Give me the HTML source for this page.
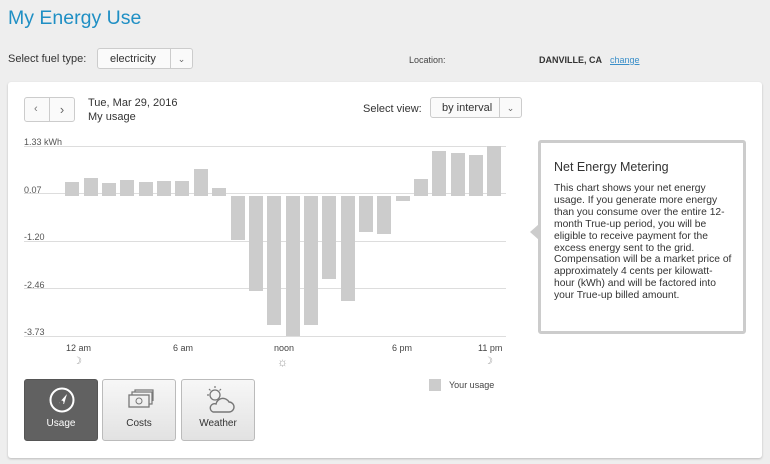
<!DOCTYPE html>
<html><head><meta charset="utf-8"><style>
*{margin:0;padding:0;box-sizing:border-box}
body{width:770px;height:464px;background:#eeeeee;font-family:"Liberation Sans",sans-serif;color:#333;position:relative;overflow:hidden}
.a{position:absolute}
h1{position:absolute;left:8px;top:7px;font-size:19.5px;font-weight:normal;color:#1f8fc4}
.sel{position:absolute;background:#fafafa;border:1px solid #ccc;border-radius:3px;font-size:11px;color:#333}
.sel span{position:absolute;top:4px}
.sel i{position:absolute;top:0;bottom:0;border-left:1px solid #ccc;width:22px;right:0;font-style:normal;text-align:center;color:#666;font-size:9px;line-height:20px}
.card{position:absolute;left:8px;top:82px;width:754px;height:376px;background:#fff;border-radius:3px;box-shadow:0 1px 2px #bbb}
.bar{position:absolute;background:#cccccc;width:14px}
.yl{position:absolute;left:24px;font-size:9px;color:#555}
.gl{position:absolute;left:24px;width:482px;height:1px;background:#ddd}
.xl{position:absolute;font-size:9px;color:#444;top:343px}
.btn{position:absolute;top:379px;width:74px;height:62px;border:1px solid #bbb;border-radius:3px;background:linear-gradient(#f7f7f7,#e2e2e2);font-size:10px;text-align:center;color:#333}
.btn div{position:absolute;top:38px;width:100%}
</style></head><body>
<h1>My Energy Use</h1>
<div class="a" style="left:8px;top:53px;font-size:11px">Select fuel type:</div>
<div class="sel" style="left:97px;top:48px;width:96px;height:21px"><span style="left:12px">electricity</span><i>&#8964;</i></div>
<div class="a" style="left:409px;top:55px;font-size:9px;color:#444">Location:</div>
<div class="a" style="left:539px;top:55px;font-size:9px;font-weight:bold;color:#333">DANVILLE, CA</div>
<div class="a" style="left:610px;top:55px;font-size:9px;color:#3a8fc9;text-decoration:underline">change</div>
<div class="card"></div>
<div class="sel" style="left:24px;top:97px;width:51px;height:25px"><span style="left:9px;top:5px;color:#777">&#8249;</span><i style="width:25px;line-height:23px;font-size:13px">&#8250;</i></div>
<div class="a" style="left:88px;top:97px;font-size:11px">Tue, Mar 29, 2016</div>
<div class="a" style="left:88px;top:111px;font-size:11px">My usage</div>
<div class="a" style="left:363px;top:103px;font-size:11px">Select view:</div>
<div class="sel" style="left:430px;top:97px;width:92px;height:21px"><span style="left:11px">by interval</span><i>&#8964;</i></div>
<div class="gl" style="top:146px"></div><div class="gl" style="top:193px"></div><div class="gl" style="top:241px"></div><div class="gl" style="top:288px"></div><div class="gl" style="top:336px"></div>
<div class="yl" style="top:137px">1.33 kWh</div><div class="yl" style="top:185px">0.07</div><div class="yl" style="top:232px">-1.20</div><div class="yl" style="top:280px">-2.46</div><div class="yl" style="top:327px">-3.73</div>
<div class="bar" style="left:65px;top:182px;height:14px"></div>
<div class="bar" style="left:84px;top:178px;height:18px"></div>
<div class="bar" style="left:102px;top:183px;height:13px"></div>
<div class="bar" style="left:120px;top:180px;height:16px"></div>
<div class="bar" style="left:139px;top:182px;height:14px"></div>
<div class="bar" style="left:157px;top:181px;height:15px"></div>
<div class="bar" style="left:175px;top:181px;height:15px"></div>
<div class="bar" style="left:194px;top:169px;height:27px"></div>
<div class="bar" style="left:212px;top:188px;height:8px"></div>
<div class="bar" style="left:231px;top:196px;height:44px"></div>
<div class="bar" style="left:249px;top:196px;height:95px"></div>
<div class="bar" style="left:267px;top:196px;height:129px"></div>
<div class="bar" style="left:286px;top:196px;height:140px"></div>
<div class="bar" style="left:304px;top:196px;height:129px"></div>
<div class="bar" style="left:322px;top:196px;height:83px"></div>
<div class="bar" style="left:341px;top:196px;height:105px"></div>
<div class="bar" style="left:359px;top:196px;height:36px"></div>
<div class="bar" style="left:377px;top:196px;height:38px"></div>
<div class="bar" style="left:396px;top:196px;height:5px"></div>
<div class="bar" style="left:414px;top:179px;height:17px"></div>
<div class="bar" style="left:432px;top:151px;height:45px"></div>
<div class="bar" style="left:451px;top:153px;height:43px"></div>
<div class="bar" style="left:469px;top:155px;height:41px"></div>
<div class="bar" style="left:487px;top:146px;height:50px"></div>
<div class="xl" style="left:66px">12 am</div><div class="xl" style="left:173px">6 am</div><div class="xl" style="left:274px">noon</div><div class="xl" style="left:392px">6 pm</div><div class="xl" style="left:478px">11 pm</div>
<div class="a" style="left:73px;top:356px;font-size:10px;color:#999">&#9789;</div>
<div class="a" style="left:277px;top:355px;font-size:12px;color:#999">&#9788;</div>
<div class="a" style="left:484px;top:356px;font-size:10px;color:#999">&#9789;</div>
<div class="a" style="left:538px;top:140px;width:208px;height:194px;border:3px solid #ccc;border-radius:3px;background:#fff"></div>
<div class="a" style="left:530px;top:224px;width:0;height:0;border-top:8px solid transparent;border-bottom:8px solid transparent;border-right:9px solid #ccc"></div>
<div class="a" style="left:554px;top:160px;font-size:12.5px;color:#333">Net Energy Metering</div>
<div class="a" style="left:554px;top:183px;width:178px;font-size:10.3px;line-height:11.9px;color:#333">This chart shows your net energy usage. If you generate more energy than you consume over the entire 12-month True-up period, you will be eligible to receive payment for the excess energy sent to the grid. Compensation will be a market price of approximately 4 cents per kilowatt-hour (kWh) and will be factored into your True-up billed amount.</div>
<div class="a" style="left:429px;top:379px;width:12px;height:12px;background:#ccc"></div>
<div class="a" style="left:449px;top:380px;font-size:9px;color:#444">Your usage</div>
<div class="btn" style="left:24px;background:#616161;border-color:#555;color:#fff"><svg class="a" style="left:23px;top:6px" width="28" height="28" viewBox="0 0 28 28"><circle cx="14" cy="14" r="11.5" fill="none" stroke="#fff" stroke-width="2"/><path d="M11 17 L19 8 L16 18 Z" fill="#fff"/><circle cx="13.5" cy="16.5" r="2" fill="#616161"/></svg><div>Usage</div></div>
<div class="btn" style="left:102px"><svg class="a" style="left:24px;top:9px" width="28" height="20" viewBox="0 0 28 20"><rect x="2" y="6" width="20" height="12" fill="none" stroke="#777" stroke-width="1.3"/><path d="M5 6V3h20v12h-3M8 3V1h18v11" fill="none" stroke="#777" stroke-width="1.2"/><circle cx="12" cy="12" r="3" fill="none" stroke="#777"/></svg><div>Costs</div></div>
<div class="btn" style="left:181px"><svg class="a" style="left:22px;top:5px" width="32" height="30" viewBox="0 0 32 30"><circle cx="11" cy="10" r="5" fill="none" stroke="#777" stroke-width="1.3"/><path d="M11 1v2M3 10h2M5 4l1.5 1.5M17 4l-1.5 1.5" stroke="#777" stroke-width="1.2"/><path d="M9 27h16a5 5 0 0 0 0-10a7 7 0 0 0-13 2a4 4 0 0 0-3 8z" fill="#eee" stroke="#777" stroke-width="1.4"/></svg><div>Weather</div></div>
</body></html>
